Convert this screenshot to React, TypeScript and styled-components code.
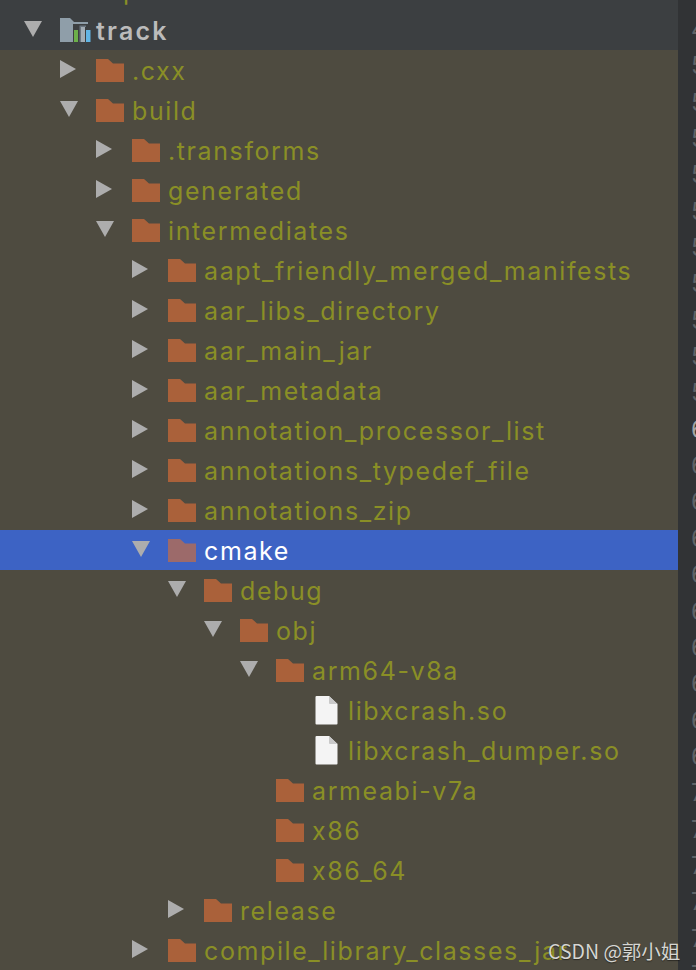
import styled, { createGlobalStyle } from "styled-components";

type Node = { name: string; depth: number; arrow?: "open" | "closed"; kind?: "folder" | "file"; selected?: boolean };

const nodes: Node[] = [
  { name: ".cxx", depth: 1, arrow: "closed" },
  { name: "build", depth: 1, arrow: "open" },
  { name: ".transforms", depth: 2, arrow: "closed" },
  { name: "generated", depth: 2, arrow: "closed" },
  { name: "intermediates", depth: 2, arrow: "open" },
  { name: "aapt_friendly_merged_manifests", depth: 3, arrow: "closed" },
  { name: "aar_libs_directory", depth: 3, arrow: "closed" },
  { name: "aar_main_jar", depth: 3, arrow: "closed" },
  { name: "aar_metadata", depth: 3, arrow: "closed" },
  { name: "annotation_processor_list", depth: 3, arrow: "closed" },
  { name: "annotations_typedef_file", depth: 3, arrow: "closed" },
  { name: "annotations_zip", depth: 3, arrow: "closed" },
  { name: "cmake", depth: 3, arrow: "open", selected: true },
  { name: "debug", depth: 4, arrow: "open" },
  { name: "obj", depth: 5, arrow: "open" },
  { name: "arm64-v8a", depth: 6, arrow: "open" },
  { name: "libxcrash.so", depth: 7, kind: "file" },
  { name: "libxcrash_dumper.so", depth: 7, kind: "file" },
  { name: "armeabi-v7a", depth: 6 },
  { name: "x86", depth: 6 },
  { name: "x86_64", depth: 6 },
  { name: "release", depth: 4, arrow: "closed" },
  { name: "compile_library_classes_jar", depth: 3, arrow: "closed" },
];

const lineNumbers = Array.from({ length: 27 }, (_, i) => i);

const Arrow = ({ type }: { type?: "open" | "closed" }) => (
  <ArrowSlot>
    {type === "open" && (
      <svg width="18" height="18" viewBox="0 0 18 18">
        <path d="M0 1H18L9 17Z" fill="#adadad" />
      </svg>
    )}
    {type === "closed" && (
      <svg width="18" height="18" viewBox="0 0 18 18">
        <path d="M0 0L16 9L0 18Z" fill="#adadad" />
      </svg>
    )}
  </ArrowSlot>
);

const FolderIcon = ({ selected }: { selected?: boolean }) => (
  <IconSlot>
    <svg width="28" height="23" viewBox="0 0 28 23">
      <path d="M0 0H12L17 4.5H28V23H0Z" fill={selected ? "#9c6a6a" : "#aa613a"} />
    </svg>
  </IconSlot>
);

const FileIcon = () => (
  <IconSlot>
    <FileSvg width="23" height="29" viewBox="0 0 23 29">
      <path d="M1.5 0H14L22.5 8V27.5Q22.5 28.5 21.5 28.5H1.5Q.5 28.5 .5 27.5V1Q.5 0 1.5 0Z" fill="#f4f4f4" />
      <path d="M14 0L22.5 8H15Q14 8 14 7Z" fill="#c9c9c9" />
    </FileSvg>
  </IconSlot>
);

const ModuleIcon = () => (
  <IconSlot>
    <svg width="31" height="25" viewBox="0 0 31 25">
      <path d="M0 0H10L14 4H28V6H13V24H0Z" fill="#8f9ea9" />
      <path d="M14 12H18V24H14Z" fill="#6cb04a" />
      <path d="M19.5 7.5H26V9H21V24H19.5Z" fill="#6b7680" />
      <path d="M21 9H25V24H21Z" fill="#a3adb5" />
      <path d="M26 12H30.5V24H26Z" fill="#62b5e5" />
    </svg>
  </IconSlot>
);

const App = () => {
  return (
    <Page>
      <GlobalStyle />
      <Tree>
        <HeaderBand>
          <Row $depth={0}>
            <ArrowSlot />
            <IconSlot />
            <Label>arp</Label>
          </Row>
          <Row $depth={0}>
            <Arrow type="open" />
            <ModuleIcon />
            <RootLabel>track</RootLabel>
          </Row>
        </HeaderBand>
        {nodes.map((node) => (
          <Row key={node.name} $depth={node.depth} $selected={node.selected}>
            <Arrow type={node.arrow} />
            {node.kind === "file" ? <FileIcon /> : <FolderIcon selected={node.selected} />}
            <Label $selected={node.selected}>{node.name}</Label>
          </Row>
        ))}
      </Tree>
      <Gutter>
        {lineNumbers.map((i) => (
          <LineNo key={i} $current={i === 11}>
            {i === 0 ? 4 : i < 11 ? 5 : i < 21 ? 6 : 7}
          </LineNo>
        ))}
      </Gutter>
      <Watermark>CSDN @郭小姐</Watermark>
    </Page>
  );
};

const GlobalStyle = createGlobalStyle`
  html, body {
    margin: 0;
    padding: 0;
    background: #4e4b40;
  }
`;

const Page = styled.div`
  position: relative;
  display: grid;
  grid-template-columns: 678px 18px;
  width: 696px;
  height: 970px;
  overflow: hidden;
  background: #4e4b40;
  font-family: Inter, "Liberation Sans", sans-serif;
`;

const Tree = styled.div`
  display: flex;
  flex-direction: column;
  margin-top: -30px;
`;

const HeaderBand = styled.div`
  background: #3c3f41;
`;

const Row = styled.div<{ $depth: number; $selected?: boolean }>`
  display: flex;
  align-items: center;
  flex: none;
  height: 40px;
  padding-left: ${(p) => 24 + p.$depth * 36}px;
  background: ${(p) => (p.$selected ? "#3d63c4" : "transparent")};
`;

const ArrowSlot = styled.span`
  display: flex;
  align-items: center;
  flex: none;
  width: 36px;
  margin-top: -2px;
`;

const IconSlot = styled.span`
  display: flex;
  align-items: center;
  flex: none;
  width: 36px;
`;

const FileSvg = styled.svg`
  margin-left: 3px;
`;

const Label = styled.span<{ $selected?: boolean }>`
  font-size: 25px;
  line-height: 40px;
  letter-spacing: 1.6px;
  padding-top: 2px;
  white-space: nowrap;
  color: ${(p) => (p.$selected ? "#ffffff" : "#8a8f26")};
`;

const RootLabel = styled.span`
  font-size: 25px;
  font-weight: 600;
  line-height: 40px;
  letter-spacing: 2.2px;
  padding-top: 2px;
  color: #bbbbbb;
`;

const Gutter = styled.div`
  display: flex;
  flex-direction: column;
  padding: 12px 0 0 13px;
  background: #313335;
  overflow: hidden;
`;

const LineNo = styled.div<{ $current?: boolean }>`
  flex: none;
  height: 36.35px;
  font-size: 24px;
  line-height: 36.35px;
  color: ${(p) => (p.$current ? "#a4a3a3" : "#606366")};
`;

const Watermark = styled.div`
  position: absolute;
  left: 548px;
  top: 938px;
  font-family: "Noto Sans CJK SC", "Liberation Sans", sans-serif;
  font-size: 19.5px;
  line-height: 26px;
  white-space: nowrap;
  color: #d6d6d2;
  text-shadow: 0 1px 1px rgba(0, 0, 0, 0.45);
`;

export default App;
